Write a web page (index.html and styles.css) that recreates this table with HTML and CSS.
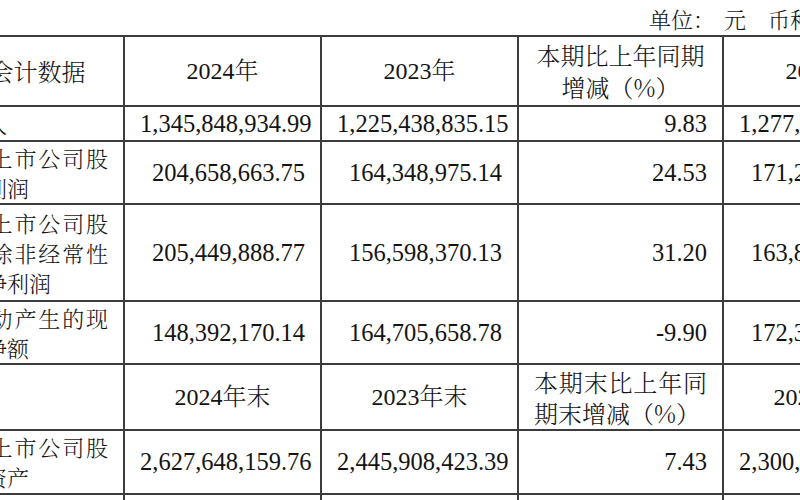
FILE: index.html
```html
<!DOCTYPE html>
<html lang="zh-CN">
<head>
<meta charset="utf-8">
<title>主要会计数据</title>
<link rel="stylesheet" href="styles.css">
</head>
<body>
<div class="sheet">
  <div class="unit">单位：<span class="u-yuan">元</span><span class="u-cur">币种：人民币</span></div>
  <table class="data">
    <colgroup>
      <col class="c-label">
      <col class="c-val">
      <col class="c-val">
      <col class="c-chg">
      <col class="c-val">
    </colgroup>
    <tr class="r-head">
      <th class="lbl-head">主要会计数据</th>
      <th>2024年</th>
      <th>2023年</th>
      <th class="cjk">本期比上年同期增减（%）</th>
      <th>2022年</th>
    </tr>
    <tr class="r-1">
      <td class="lbl">营业收入</td>
      <td class="num">1,345,848,934.99</td>
      <td class="num">1,225,438,835.15</td>
      <td class="num">9.83</td>
      <td class="num">1,277,836,502.31</td>
    </tr>
    <tr class="r-2">
      <td class="lbl">归属于上市公司股东的净利润</td>
      <td class="num">204,658,663.75</td>
      <td class="num">164,348,975.14</td>
      <td class="num">24.53</td>
      <td class="num">171,256,840.92</td>
    </tr>
    <tr class="r-3">
      <td class="lbl">归属于上市公司股东的扣除非经常性损益的净利润</td>
      <td class="num">205,449,888.77</td>
      <td class="num">156,598,370.13</td>
      <td class="num">31.20</td>
      <td class="num">163,864,217.55</td>
    </tr>
    <tr class="r-2">
      <td class="lbl">经营活动产生的现金流量净额</td>
      <td class="num">148,392,170.14</td>
      <td class="num">164,705,658.78</td>
      <td class="num">-9.90</td>
      <td class="num">172,325,610.48</td>
    </tr>
    <tr class="r-head2">
      <th class="lbl-head"></th>
      <th>2024年末</th>
      <th>2023年末</th>
      <th class="cjk justify">本期末比上年同期末增减（%）</th>
      <th>2022年末</th>
    </tr>
    <tr class="r-2b">
      <td class="lbl">归属于上市公司股东的净资产</td>
      <td class="num">2,627,648,159.76</td>
      <td class="num">2,445,908,423.39</td>
      <td class="num">7.43</td>
      <td class="num">2,300,586,174.20</td>
    </tr>
    <tr class="r-1">
      <td class="lbl">总资产</td>
      <td class="num">3,412,906,377.58</td>
      <td class="num">3,158,240,116.02</td>
      <td class="num">8.06</td>
      <td class="num">2,987,553,402.67</td>
    </tr>
  </table>
</div>
</body>
</html>
```

FILE: styles.css
```css
html, body {
  margin: 0;
  padding: 0;
  background: #ffffff;
}

body {
  width: 800px;
  height: 500px;
  overflow: hidden;
  color: #141414;
  font-family: "Liberation Serif", "Noto Serif CJK SC", "Noto Sans CJK SC", serif;
}

.sheet {
  width: 1017px;
  margin-left: -98px;
}

.unit {
  height: 35px;
  box-sizing: border-box;
  padding-top: 4px;
  padding-right: 19px;
  text-align: right;
  font-family: "Noto Serif CJK SC", "Noto Sans CJK SC", sans-serif;
  font-size: 22px;
  line-height: 30px;
  font-weight: 300;
  white-space: nowrap;
}

.u-yuan {
  margin-left: 9px;
}

.u-cur {
  margin-left: 22px;
}

.data {
  width: 1017px;
  table-layout: fixed;
  border-collapse: collapse;
}

.c-label { width: 221px; }
.c-val { width: 197px; }
.c-chg { width: 205px; }

.data th,
.data td {
  border: 2px solid #3c3c3c;
  padding: 0 15px;
  vertical-align: middle;
  line-height: 30px;
  font-weight: 300;
}

.data th {
  font-size: 24px;
  line-height: 32px;
  text-align: center;
}

.data th.cjk {
  font-family: "Noto Serif CJK SC", "Noto Sans CJK SC", "Liberation Serif", sans-serif;
}

.data th.lbl-head {
  font-family: "Noto Serif CJK SC", "Noto Sans CJK SC", sans-serif;
}

.data th.justify {
  text-align: justify;
  text-align-last: left;
  line-height: 31px;
}

.lbl {
  font-family: "Noto Serif CJK SC", "Noto Sans CJK SC", sans-serif;
  font-size: 22px;
  text-align: justify;
  text-align-last: left;
}

.num {
  font-size: 24.5px;
  text-align: right;
  white-space: nowrap;
}

.r-head { height: 70px; }
.r-1 { height: 35px; }
.r-2 { height: 63px; }
.r-3 { height: 97px; }
.r-head2 { height: 66px; }
.r-2b { height: 64px; }
```
